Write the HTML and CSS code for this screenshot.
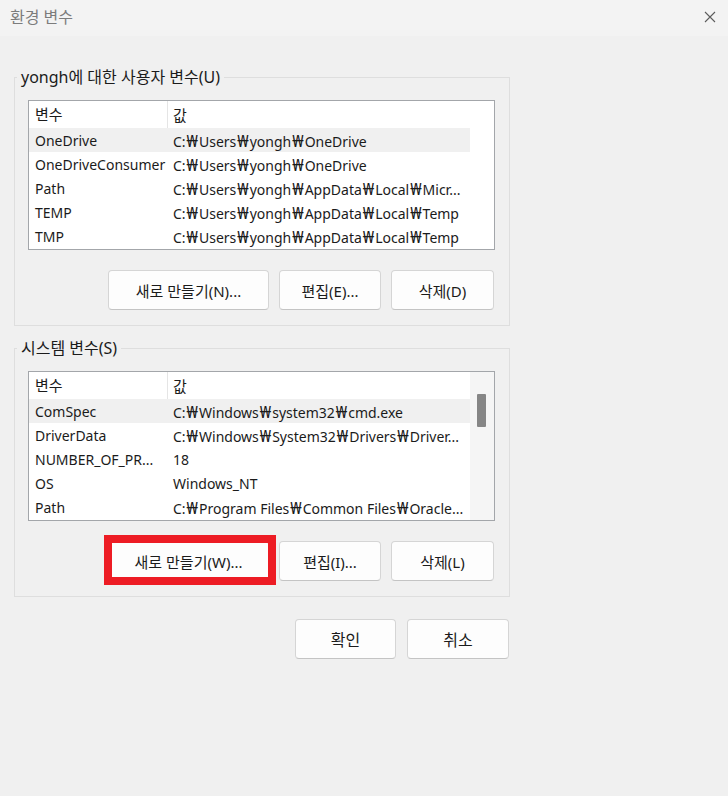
FILE: index.html
```html
<!DOCTYPE html>
<html lang="ko">
<head>
  <meta charset="UTF-8">
  <meta name="viewport" content="width=device-width, initial-scale=1.0">
  <title>환경 변수</title>
  <link rel="stylesheet" href="styles.css">
</head>
<body>

  <div class="window">
    <div class="titlebar">
      <span class="title">환경 변수</span>
      <svg class="close" width="12" height="12" viewBox="0 0 12 12">
        <path d="M1 1 L11 11 M11 1 L1 11" stroke="#5c5c5c" stroke-width="1.1" fill="none"/>
      </svg>
    </div>

    <div class="content">
      <div class="group">
        <span class="legend">yongh에 대한 사용자 변수(U)</span>
        <div class="list">
          <div class="rows">
            <div class="row head"><span class="c1">변수</span><span class="c2">값</span></div>
            <div class="row sel"><span class="c1">OneDrive</span><span class="c2">C:<i>₩</i>Users<i>₩</i>yongh<i>₩</i>OneDrive</span></div>
            <div class="row"><span class="c1">OneDriveConsumer</span><span class="c2">C:<i>₩</i>Users<i>₩</i>yongh<i>₩</i>OneDrive</span></div>
            <div class="row"><span class="c1">Path</span><span class="c2">C:<i>₩</i>Users<i>₩</i>yongh<i>₩</i>AppData<i>₩</i>Local<i>₩</i>Micr...</span></div>
            <div class="row"><span class="c1">TEMP</span><span class="c2">C:<i>₩</i>Users<i>₩</i>yongh<i>₩</i>AppData<i>₩</i>Local<i>₩</i>Temp</span></div>
            <div class="row"><span class="c1">TMP</span><span class="c2">C:<i>₩</i>Users<i>₩</i>yongh<i>₩</i>AppData<i>₩</i>Local<i>₩</i>Temp</span></div>
          </div>
          <div class="side"></div>
        </div>
        <div class="buttons">
          <button class="btn wide">새로 만들기(N)...</button>
          <button class="btn">편집(E)...</button>
          <button class="btn small">삭제(D)</button>
        </div>
      </div>

      <div class="group second">
        <span class="legend">시스템 변수(S)</span>
        <div class="list">
          <div class="rows">
            <div class="row head"><span class="c1">변수</span><span class="c2">값</span></div>
            <div class="row sel"><span class="c1">ComSpec</span><span class="c2">C:<i>₩</i>Windows<i>₩</i>system32<i>₩</i>cmd.exe</span></div>
            <div class="row"><span class="c1">DriverData</span><span class="c2">C:<i>₩</i>Windows<i>₩</i>System32<i>₩</i>Drivers<i>₩</i>Driver...</span></div>
            <div class="row"><span class="c1">NUMBER_OF_PR...</span><span class="c2">18</span></div>
            <div class="row"><span class="c1">OS</span><span class="c2">Windows_NT</span></div>
            <div class="row"><span class="c1">Path</span><span class="c2">C:<i>₩</i>Program Files<i>₩</i>Common Files<i>₩</i>Oracle...</span></div>
          </div>
          <div class="side scroll"><div class="thumb"></div></div>
        </div>
        <div class="buttons">
          <button class="btn wide marked">새로 만들기(W)...<span class="mark"></span></button>
          <button class="btn">편집(I)...</button>
          <button class="btn small">삭제(L)</button>
        </div>
      </div>

      <div class="footer">
        <button class="btn ok">확인</button>
        <button class="btn ok">취소</button>
      </div>
    </div>
  </div>

</body>
</html>
```

FILE: styles.css
```css
body {
  margin: 0;
  background: #f0f0f0;
  font-family: "Noto Sans", "Noto Sans CJK KR", sans-serif;
  font-size: 14px;
  color: #1b1b1b;
}

.window {
  width: 728px;
  height: 796px;
  background: #f0f0f0;
}

.titlebar {
  height: 36px;
  background: #f3f3f3;
  display: flex;
  align-items: center;
  justify-content: space-between;
  padding: 0 12px 0 10px;
}

.title {
  font-size: 16px;
  color: #7c7c7c;
  margin-top: -4px;
}

.close {
  margin-top: -2px;
}

.content {
  padding: 41px 0 0 14px;
}

.group {
  position: relative;
  width: 496px;
  box-sizing: border-box;
  border: 1px solid #dedede;
  padding: 22px 14px 15px 13px;
}

.group.second {
  margin-top: 22px;
}

.legend {
  position: absolute;
  top: -11px;
  left: 2px;
  padding: 0 4px;
  background: #f0f0f0;
  font-size: 16px;
  line-height: 20px;
}

.list {
  display: flex;
  height: 150px;
  box-sizing: border-box;
  border: 1px solid #a3a6aa;
  background: #fff;
  overflow: hidden;
}

.rows {
  width: 441px;
}

.row {
  display: flex;
  height: 24px;
  align-items: center;
  white-space: nowrap;
}

.row.head {
  height: 27px;
  font-size: 15px;
}

.row.sel {
  background: #f0f0f0;
}

.c1 {
  width: 133px;
  padding-left: 6px;
  overflow: hidden;
}

.head .c1 {
  width: 132px;
  height: 27px;
  line-height: 27px;
  border-right: 1px solid #e5e5e5;
}

.c2 {
  padding-left: 5px;
}

.c2 i {
  font-style: normal;
  font-size: 17px;
  margin: 0 1px;
}

.side {
  flex: 1;
}

.side.scroll {
  background: #f5f5f5;
}

.thumb {
  width: 9px;
  height: 33px;
  margin: 22px 0 0 7px;
  background: #868686;
  border-radius: 1px;
}

.buttons {
  display: flex;
  justify-content: flex-end;
  gap: 10px;
  margin-top: 20px;
  padding-right: 1px;
}

.btn {
  height: 40px;
  width: 102px;
  font-family: inherit;
  font-size: 15px;
  color: #1b1b1b;
  background: #fdfdfd;
  border: 1px solid #d5d5d5;
  border-bottom-color: #c4c4c4;
  border-radius: 4px;
  padding: 0;
}

.btn.wide {
  width: 161px;
}

.btn.small {
  width: 103px;
}

.btn.marked {
  position: relative;
}

.mark {
  position: absolute;
  top: -7px;
  left: -5px;
  width: 172px;
  height: 50px;
  box-sizing: border-box;
  border: 8px solid #ed1c24;
}

.footer {
  width: 496px;
  display: flex;
  justify-content: flex-end;
  gap: 11px;
  margin-top: 22px;
  padding-right: 1px;
  box-sizing: border-box;
}

.btn.ok {
  height: 40px;
  width: 101px;
  font-size: 16px;
}

.btn.ok + .btn.ok {
  width: 102px;
}
```
